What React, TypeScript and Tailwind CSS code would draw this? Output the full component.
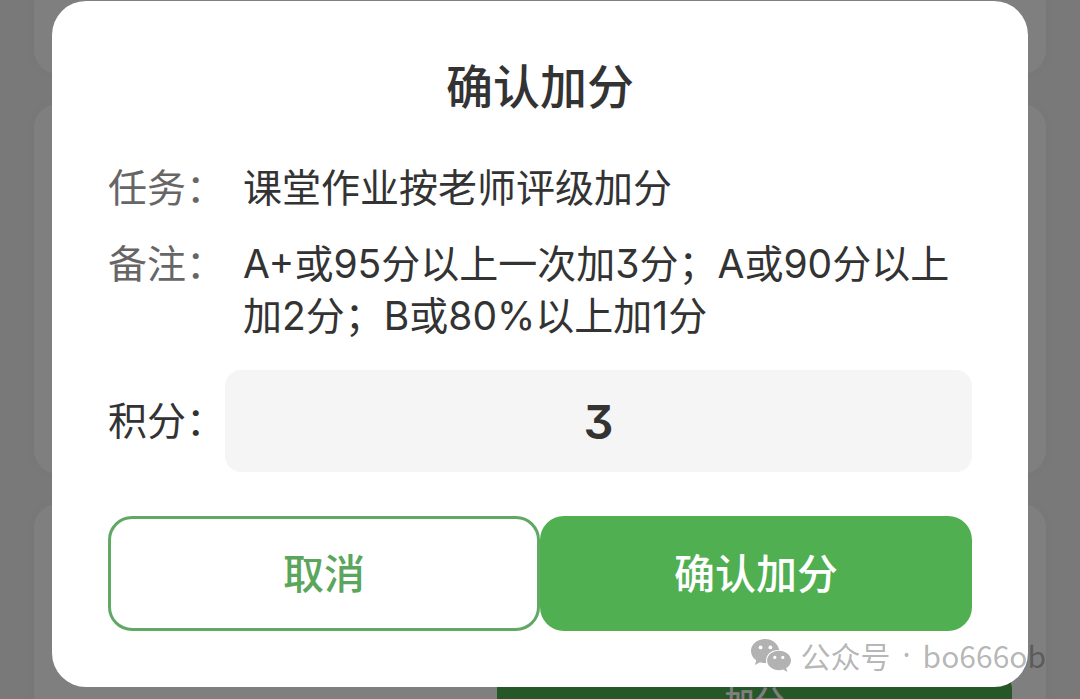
import { useState } from "react";
import { clsx } from "clsx";

const tasks = [
  { id: 1, className: "h-[74px]" },
  { id: 2, className: "h-[370px]" },
  { id: 3, className: "h-[370px] pt-[169px]" },
];

interface DetailRowProps {
  label: string;
  children: React.ReactNode;
}

function DetailRow({ label, children }: DetailRowProps) {
  return (
    <div className="flex gap-[18px]">
      <dt className="shrink-0 text-[#666]">{label}</dt>
      <dd className="flex-1 text-[#333]">{children}</dd>
    </div>
  );
}

function TaskList() {
  return (
    <div className="flex flex-col gap-[30px] px-[34px]">
      {tasks.map((task, index) => (
        <div
          key={task.id}
          className={clsx(
            "flex shrink-0 items-start justify-end bg-white px-[34px] shadow-[0_0_16px_rgba(0,0,0,0.04)]",
            index === 0 ? "rounded-b-3xl" : "rounded-3xl",
            task.className
          )}
        >
          {task.id === 3 && (
            <button
              type="button"
              className="h-14 w-6/11 rounded-2xl bg-[#4caf50] text-[30px] font-medium text-white"
            >
              加分
            </button>
          )}
        </div>
      ))}
    </div>
  );
}

function ChatIcon() {
  return (
    <svg viewBox="0 0 40 33" className="h-[33px] w-10" aria-hidden="true">
      <path
        fill="#b2b2b2"
        d="M14.2 0C6.4 0 0 5.2 0 12c0 3.8 2 7.1 5.2 9.3L4 26l5-2.7c1.6.5 3.4.8 5.2.8h1.1a10 10 0 0 1-.3-2.4c0-6.2 5.4-10.700 12-10.700h1.200C27 4.500 21.200 0 14.200 0Z"
      />
      <path
        fill="#b2b2b2"
        d="M28 11.800c-6.600 0-11.900 4.300-11.900 9.700s5.300 9.700 11.900 9.700c1.500 0 2.900-.2 4.200-.6l4.100 2.300-1.100-3.800c2.900-1.700 4.800-4.500 4.800-7.600 0-5.400-5.400-9.700-12-9.700Z"
      />
      <g fill="#fff">
        <circle cx="9.600" cy="8.400" r="1.900" />
        <circle cx="19.400" cy="8.400" r="1.900" />
        <circle cx="23.800" cy="18.400" r="1.600" />
        <circle cx="31.800" cy="18.400" r="1.600" />
      </g>
    </svg>
  );
}

export default function App() {
  const [points, setPoints] = useState("3");

  return (
    <div className="relative h-screen overflow-hidden bg-[#f3f3f3] font-['Inter','Noto_Sans_CJK_SC',sans-serif] [font-feature-settings:'cv09']">
      <TaskList />

      {/* Backdrop and dialog */}
      <div className="absolute inset-0 flex items-start justify-center bg-black/50 px-[52px] pt-px">
        <div
          role="dialog"
          aria-modal="true"
          aria-labelledby="dialog-title"
          className="w-full rounded-[34px] bg-white px-14 pt-14 pb-14 text-[39px] leading-[52px] text-[#333]"
        >
          <h2
            id="dialog-title"
            className="mb-[45px] text-center text-[47px] leading-[60px] font-medium"
          >
            确认加分
          </h2>

          <dl className="mb-7 flex flex-col gap-6">
            <DetailRow label="任务：">课堂作业按老师评级加分</DetailRow>
            <DetailRow label="备注：">
              A+或95分以上一次加3分；A或90分以上加2分；B或80%以上加1分
            </DetailRow>
          </dl>

          <div className="mb-11 flex items-center">
            <label htmlFor="points" className="shrink-0">
              积分：
            </label>
            <input
              id="points"
              type="text"
              inputMode="numeric"
              value={points}
              onChange={(e) => setPoints(e.target.value)}
              className="h-[102px] min-w-0 flex-1 rounded-2xl bg-[#f5f5f5] text-center text-[47px] font-semibold outline-none"
            />
          </div>

          <div className="grid grid-cols-2 text-[41px] font-medium">
            <button
              type="button"
              className="h-[115px] rounded-3xl border-3 border-[#62a865] text-[#5aa65d]"
            >
              取消
            </button>
            <button
              type="button"
              className="h-[115px] rounded-3xl bg-[#4faf51] text-white"
            >
              确认加分
            </button>
          </div>
        </div>
      </div>

      {/* Account watermark */}
      <div className="pointer-events-none absolute right-[34px] bottom-[22px] flex items-center gap-2.5 font-['Noto_Sans_CJK_SC',sans-serif] text-[30px] leading-[44px] text-black/30">
        <ChatIcon />
        <span className="flex gap-3">
          <span>公众号</span>
          <span className="font-['Noto_Sans',sans-serif]">·</span>
          <span>bo666ob</span>
        </span>
      </div>
    </div>
  );
}
